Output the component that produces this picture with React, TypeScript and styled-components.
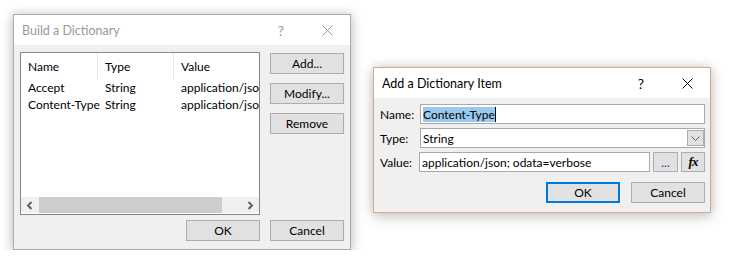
import styled, { createGlobalStyle } from "styled-components";

const GlobalStyle = createGlobalStyle`
  body {
    margin: 0;
    background: #ffffff;
    font-family: Lato, "Noto Sans", "Liberation Sans", sans-serif;
    font-size: 12px;
    color: #000000;
  }
`;

const Desktop = styled.div`
  display: flex;
  align-items: flex-start;
  gap: 22px;
  padding: 14px 0 0 13px;
`;

interface WindowProps {
  $active?: boolean;
  $offset?: number;
}

const Window = styled.div<WindowProps>`
  width: 336px;
  margin-top: ${(p) => p.$offset ?? 0}px;
  border: 1px solid ${(p) => (p.$active ? "#d4ab8e" : "#ababab")};
  background: #f0f0f0;
  box-shadow: 0 0 10px rgba(0, 0, 0, 0.18), 0 5px 14px rgba(0, 0, 0, 0.14);
`;

const TitleBar = styled.div<WindowProps>`
  height: 30px;
  background: #ffffff;
  display: flex;
  align-items: center;
  padding-left: 8px;
  color: ${(p) => (p.$active ? "#000000" : "#999999")};
`;

const TitleText = styled.div`
  flex: 1;
  font-size: 12.5px;
`;

const TitleButton = styled.div`
  width: 46px;
  height: 30px;
  display: flex;
  align-items: center;
  justify-content: center;
  font-size: 14px;
`;

const Body = styled.div`
  display: grid;
  grid-template-columns: 240px 74px;
  column-gap: 10px;
  row-gap: 5px;
  padding: 7px 6px 8px 6px;
`;

const ListBox = styled.div`
  height: 163px;
  box-sizing: border-box;
  border: 1px solid #828790;
  background: #ffffff;
  display: flex;
  flex-direction: column;
  overflow: hidden;
`;

const Row = styled.div<{ $header?: boolean }>`
  display: flex;
  height: ${(p) => (p.$header ? 26 : 17)}px;
  align-items: center;
`;

const Cell = styled.div<{ $width?: number; $sep?: boolean }>`
  ${(p) => (p.$width ? `width: ${p.$width}px;` : "flex: 1; overflow: hidden;")}
  flex-shrink: 0;
  box-sizing: border-box;
  padding-left: 7px;
  white-space: nowrap;
  height: 100%;
  display: flex;
  align-items: center;
  border-right: ${(p) => (p.$sep ? "1px solid #e5e5e5" : "none")};
`;

const Spacer = styled.div`
  flex: 1;
`;

const HScroll = styled.div`
  height: 16px;
  margin-bottom: 1px;
  background: #f0f0f0;
  display: flex;
  align-items: stretch;
`;

const ScrollArrow = styled.div`
  width: 17px;
  display: flex;
  align-items: center;
  justify-content: center;
`;

const Track = styled.div`
  flex: 1;
  display: flex;
  padding-left: 1px;
`;

const Thumb = styled.div`
  width: 183px;
  background: #cdcdcd;
`;

const ButtonColumn = styled.div`
  display: flex;
  flex-direction: column;
  gap: 9px;
  padding-top: 1px;
`;

const Button = styled.button<{ $default?: boolean; $w?: number }>`
  width: ${(p) => p.$w ?? 74}px;
  height: 21px;
  box-sizing: border-box;
  margin: 0;
  padding: 0;
  background: #e1e1e1;
  border: ${(p) => (p.$default ? "2px solid #0078d7" : "1px solid #adadad")};
  font-family: inherit;
  font-size: 12px;
  color: #000000;
  display: flex;
  align-items: center;
  justify-content: center;
`;

const FooterLeft = styled.div`
  display: flex;
  justify-content: flex-end;
`;

const Form = styled.div`
  display: grid;
  grid-template-columns: 40px 1fr;
  row-gap: 4px;
  align-items: center;
  padding: 6px 6px 9px 6px;
`;

const Label = styled.div`
  height: 20px;
  display: flex;
  align-items: center;
`;

const Field = styled.div`
  height: 20px;
  box-sizing: border-box;
  border: 1px solid #a9a9a9;
  background: #ffffff;
  display: flex;
  align-items: center;
  padding-left: 2px;
  white-space: nowrap;
  overflow: hidden;
`;

const Selected = styled.span`
  background: #99c9ef;
  color: #000000;
  border-right: 1px solid #000000;
`;

const Combo = styled(Field)`
  padding-right: 0;
  align-items: stretch;
`;

const ComboText = styled.div`
  flex: 1;
  display: flex;
  align-items: center;
`;

const DropButton = styled.div`
  width: 17px;
  margin: 1px 0 1px 0;
  box-sizing: border-box;
  border: 1px solid #adadad;
  background: #e1e1e1;
  display: flex;
  align-items: center;
  justify-content: center;
`;

const ValueRow = styled.div`
  display: flex;
  gap: 3px;
  margin-left: -1px;
`;

const ValueField = styled(Field)`
  width: 231px;
`;

const SmallButton = styled(Button)`
  height: 20px;
  color: #1a1a8a;
`;

const FxText = styled.span`
  font-family: "Liberation Serif", "DejaVu Serif", serif;
  font-style: italic;
  font-weight: bold;
  font-size: 13px;
  letter-spacing: -1px;
  color: #000000;
`;

const FormFooter = styled.div`
  grid-column: 1 / 3;
  display: flex;
  justify-content: flex-end;
  gap: 11px;
  margin-top: 6px;
`;

const CloseIcon = ({ color }: { color: string }) => (
  <svg width="11" height="11" viewBox="0 0 11 11">
    <path d="M0.5 0.5 L10.5 10.5 M10.5 0.5 L0.5 10.5" stroke={color} strokeWidth="1" />
  </svg>
);

const Chevron = ({ dir }: { dir: "left" | "right" }) => (
  <svg width="7" height="9" viewBox="0 0 7 9">
    <path
      d={dir === "left" ? "M5.5 1 L2 4.5 L5.5 8" : "M1.5 1 L5 4.5 L1.5 8"}
      stroke="#606060"
      strokeWidth="2"
      fill="none"
    />
  </svg>
);

const DownChevron = () => (
  <svg width="9" height="5" viewBox="0 0 9 5">
    <path d="M0.5 0.5 L4.5 4.5 L8.5 0.5" stroke="#606060" strokeWidth="1" fill="none" />
  </svg>
);

const items = [
  { name: "Accept", type: "String", value: "application/json" },
  { name: "Content-Type", type: "String", value: "application/json" },
];

export default function App() {
  return (
    <>
      <GlobalStyle />
      <Desktop>
        <Window>
          <TitleBar>
            <TitleText>Build a Dictionary</TitleText>
            <TitleButton>?</TitleButton>
            <TitleButton>
              <CloseIcon color="#9a9a9a" />
            </TitleButton>
          </TitleBar>
          <Body>
            <ListBox>
              <Row $header>
                <Cell $width={77} $sep>Name</Cell>
                <Cell $width={76} $sep>Type</Cell>
                <Cell>Value</Cell>
              </Row>
              {items.map((it) => (
                <Row key={it.name}>
                  <Cell $width={77}>{it.name}</Cell>
                  <Cell $width={76}>{it.type}</Cell>
                  <Cell>{it.value}</Cell>
                </Row>
              ))}
              <Spacer />
              <HScroll>
                <ScrollArrow>
                  <Chevron dir="left" />
                </ScrollArrow>
                <Track>
                  <Thumb />
                </Track>
                <ScrollArrow>
                  <Chevron dir="right" />
                </ScrollArrow>
              </HScroll>
            </ListBox>
            <ButtonColumn>
              <Button>Add...</Button>
              <Button>Modify...</Button>
              <Button>Remove</Button>
            </ButtonColumn>
            <FooterLeft>
              <Button>OK</Button>
            </FooterLeft>
            <Button>Cancel</Button>
          </Body>
        </Window>

        <Window $active $offset={53}>
          <TitleBar $active>
            <TitleText>Add a Dictionary Item</TitleText>
            <TitleButton>?</TitleButton>
            <TitleButton>
              <CloseIcon color="#000000" />
            </TitleButton>
          </TitleBar>
          <Form>
            <Label>Name:</Label>
            <Field>
              <Selected>Content-Type</Selected>
            </Field>
            <Label>Type:</Label>
            <Combo>
              <ComboText>String</ComboText>
              <DropButton>
                <DownChevron />
              </DropButton>
            </Combo>
            <Label>Value:</Label>
            <ValueRow>
              <ValueField>application/json; odata=verbose</ValueField>
              <SmallButton $w={25}>...</SmallButton>
              <SmallButton $w={24}>
                <FxText>fx</FxText>
              </SmallButton>
            </ValueRow>
            <FormFooter>
              <Button $default>OK</Button>
              <Button>Cancel</Button>
            </FormFooter>
          </Form>
        </Window>
      </Desktop>
    </>
  );
}
